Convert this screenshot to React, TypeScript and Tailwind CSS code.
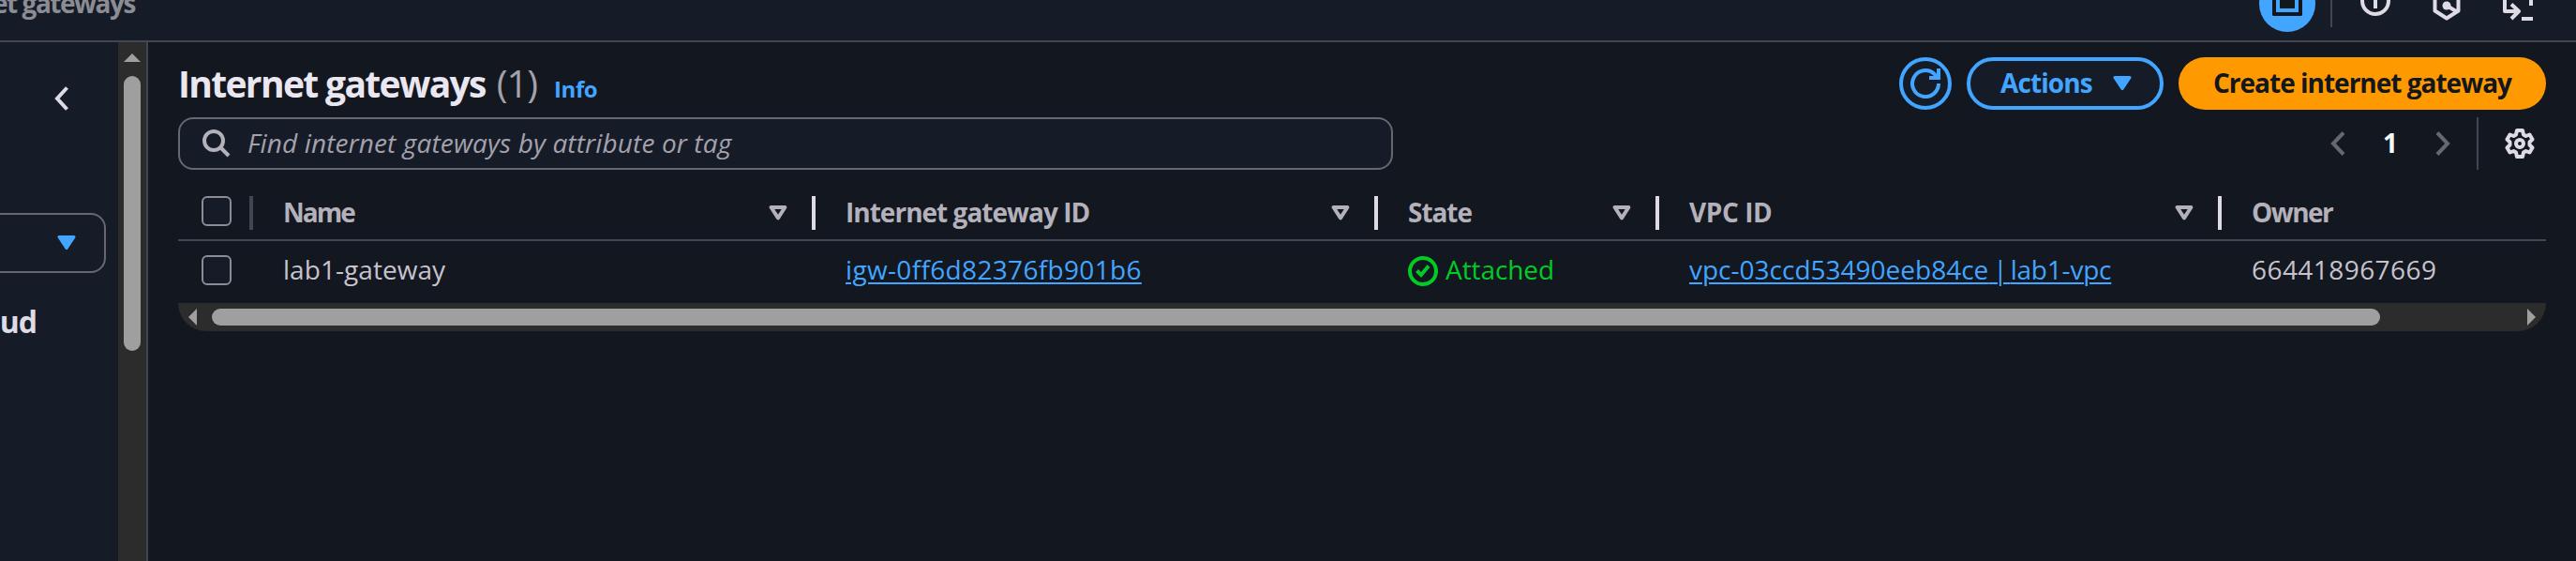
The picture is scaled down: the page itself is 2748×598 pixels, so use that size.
import type { ReactNode } from "react";

function Caret({ className = "" }: { className?: string }) {
  return (
    <svg viewBox="0 0 20 16" className={"h-4 w-5 " + className}>
      <path d="M2 2h16l-8 12z" fill="currentColor" stroke="currentColor" strokeWidth="3" strokeLinejoin="round" transform="translate(0 -0.4)" />
    </svg>
  );
}

function SortCaret() {
  return (
    <svg viewBox="0 0 20 16" className="h-4 w-5 text-[#b4b1bb]">
      <path d="M2.6 2h14.8L10 13.4z" fill="none" stroke="currentColor" strokeWidth="4" strokeLinejoin="round" />
    </svg>
  );
}

function Checkbox() {
  return <div className="size-8 rounded-md border-2 border-[#8c8c94] bg-[#161c27]" />;
}

function HeaderCell({ width, spacing, children }: { width: string; spacing: string; children: ReactNode }) {
  return (
    <div className={"flex h-9 items-center justify-between pl-8 pr-[30px] " + width}>
      <span className={"-mt-[3px] leading-10 " + spacing}>{children}</span>
      <SortCaret />
    </div>
  );
}

const Divider = () => <div className="-ml-1 h-9 w-1 shrink-0 bg-[#dedbe4]" />;

function TopBar() {
  return (
    <header className="flex h-[45px] shrink-0 items-start border-b-2 border-[#424650] overflow-hidden">
      <div className="-mt-[17px] flex w-[144px] shrink-0 justify-end whitespace-nowrap text-[28px] font-bold leading-10 tracking-[-1.46px] text-[#8c8c94]">
        Internet gateways
      </div>
      <svg viewBox="0 0 338 43" className="ml-auto h-[43px] w-[338px] shrink-0">
        <circle cx="30" cy="4" r="30" fill="#42a5ff" />
        <path d="M14 -10h32v25.500a1.500 1.500 0 0 1-1.500 1.500h-29a1.500 1.500 0 0 1-1.500-1.500z" fill="#12161d" />
        <path d="M20 -10v21h20v-21" fill="none" stroke="#42a5ff" strokeWidth="4" />
        <path d="M77 0v29" stroke="#424650" strokeWidth="2" />
        <g fill="none" stroke="#dedbe4" strokeWidth="4" strokeLinejoin="round">
          <circle cx="124" cy="1" r="14" />
          <path d="M124 -4v13" />
          <path d="M187.500 -4v15.500l12.500 8 12.500-8v-15.500M200 6l11 6.500" />
          <path d="M262 -4v16h14M269 4.500l8 7.500-8 8" />
          <path d="M290 -4v10M280 20h12" />
        </g>
        <circle cx="200" cy="6" r="4.500" fill="#dedbe4" />
      </svg>
    </header>
  );
}

function Sidebar() {
  return (
    <aside className="flex w-[158px] shrink-0 border-r-2 border-[#424650]">
      <div className="w-[126px] overflow-hidden pt-[47px]">
        <svg viewBox="0 0 16 26" className="ml-[58px] h-[26px] w-4">
          <path d="M13.500 1.500 3 13l10.500 11.500" fill="none" stroke="#dedbe4" strokeWidth="4" />
        </svg>
        <div className="-ml-5 mt-[109px] flex h-16 w-[133px] items-center justify-end rounded-2xl border-2 border-[#656871] pr-[30px] text-[#42a5ff]">
          <Caret />
        </div>
        <div className="mt-[28px] flex w-[39px] justify-end whitespace-nowrap text-[32px] font-bold leading-[48px] tracking-[-1px] text-[#dedbe4]">
          cloud
        </div>
      </div>
      <div className="flex w-[30px] flex-col items-center bg-[#2c2c2c] pt-3">
        <svg viewBox="0 0 18 9" className="h-[9px] w-[18px]">
          <path d="M9 0l9 9H0z" fill="#9f9f9f" />
        </svg>
        <div className="mt-[15px] h-[293px] w-[18px] rounded-full bg-[#9f9f9f]" />
      </div>
    </aside>
  );
}

function TitleRow() {
  return (
    <div className="flex h-14 items-center">
      <div className="mt-[6px] flex items-baseline whitespace-nowrap leading-[56px]">
        <h1 className="text-[39px] font-bold tracking-[-1.66px] text-[#ebe7f0]">Internet gateways</h1>
        <span className="ml-[12px] text-[40px] tracking-[-1.08px] text-[#a4a1ac]">(1)</span>
        <a className="ml-[18px] text-[24px] font-bold tracking-[-0.44px] text-[#42a5ff]">Info</a>
      </div>
      <div className="ml-auto flex gap-4">
        <button className="flex size-14 items-center justify-center rounded-full border-4 border-[#42a5ff] bg-[#161c27]">
          <svg viewBox="0 0 32 32" className="size-8 shrink-0" fill="none" stroke="#42a5ff" strokeWidth="4">
            <path d="M30 16a14 14 0 1 1-4.500-10.200l3 3.700" />
            <path d="M30 0v10H20" />
          </svg>
        </button>
        <button className="flex h-14 w-[210px] items-center justify-between rounded-full border-4 border-[#42a5ff] bg-[#161c27] pl-8 pr-[30px] text-[#42a5ff]">
          <span className="-mt-[2px] text-[28px] font-bold leading-10 tracking-[-0.91px]">Actions</span>
          <Caret />
        </button>
        <button className="flex h-14 w-[392px] items-center justify-center rounded-full bg-[#ff9900] text-[#12161d]">
          <span className="-mt-[2px] text-[28px] font-bold leading-10 tracking-[-1px]">Create internet gateway</span>
        </button>
      </div>
    </div>
  );
}

function FilterRow() {
  return (
    <div className="mt-2 flex h-14 items-center">
      <div className="flex h-14 w-[1296px] items-center rounded-2xl border-2 border-[#656871] bg-[#161c27] pl-6">
        <svg viewBox="0 0 30 30" className="size-[30px]" fill="none" stroke="#b4b1bb" strokeWidth="4">
          <circle cx="12" cy="12" r="10" />
          <path d="M19 19l9 9" />
        </svg>
        <span className="-mt-[2px] ml-[18px] text-[28px] italic leading-10 tracking-[0.13px] text-[#a4a1ac]">
          Find internet gateways by attribute or tag
        </span>
      </div>
      <div className="ml-auto flex h-14 items-center pr-3">
        <svg viewBox="0 0 16 26" className="h-[26px] w-4">
          <path d="M14 1.500 3 13l11 11.500" fill="none" stroke="#656871" strokeWidth="4" />
        </svg>
        <span className="-mt-[2px] w-24 text-center text-[28px] font-bold leading-10 text-[#f9f9fa]">1</span>
        <svg viewBox="0 0 16 26" className="h-[26px] w-4">
          <path d="M2 1.500 13 13 2 24.500" fill="none" stroke="#656871" strokeWidth="4" />
        </svg>
        <div className="ml-7 h-14 w-[2px] bg-[#424650]" />
        <svg viewBox="0 0 32 32" className="ml-7 size-8" fill="none" stroke="#dedbe4" strokeWidth="4" strokeLinejoin="round">
          <path d="M13 2h6l1 4.500 2.500 1.500 4-1.500 3 5-3 3v3l3 3-3 5-4-1.500-2.500 1.500-1 4.500h-6l-1-4.500-2.500-1.500-4 1.500-3-5 3-3v-3l-3-3 3-5 4 1.500 2.500-1.500z" />
          <circle cx="16" cy="16" r="4" />
        </svg>
      </div>
    </div>
  );
}

function GatewayTable() {
  return (
    <div className="whitespace-nowrap text-[28px]">
      <div className="flex h-[76px] items-center border-b-2 border-[#424650] pt-[18px] font-bold text-[#b4b1bb]">
        <div className="-mt-1 flex w-[76px] pl-[25px]">
          <Checkbox />
        </div>
        <div className="h-9 w-1 shrink-0 bg-[#424650]" />
        <HeaderCell width="w-[600px]" spacing="tracking-[-2px]">Name</HeaderCell>
        <Divider />
        <HeaderCell width="w-[600px]" spacing="tracking-[-0.99px]">Internet gateway ID</HeaderCell>
        <Divider />
        <HeaderCell width="w-[300px]" spacing="tracking-[-1.04px]">State</HeaderCell>
        <Divider />
        <HeaderCell width="w-[600px]" spacing="tracking-[-0.43px]">VPC ID</HeaderCell>
        <Divider />
        <div className="-mt-[3px] pl-8 leading-10 tracking-[-1.55px]">Owner</div>
      </div>
      <div className="flex h-[66px] items-center leading-10 text-[#c6c3ce]">
        <div className="-mt-[4px] flex w-20 pl-[25px]">
          <Checkbox />
        </div>
        <div className="-mt-[7px] flex">
          <div className="w-[600px] pl-8 tracking-[0.05px]">lab1-gateway</div>
          <div className="w-[600px] pl-8">
            <a className="text-[#42a5ff] underline decoration-2 underline-offset-[3px] tracking-[0.34px]">igw-0ff6d82376fb901b6</a>
          </div>
          <div className="flex w-[300px] items-center gap-2 pl-8 text-[#00cc24]">
            <svg viewBox="0 0 32 32" className="mt-[5px] size-8" fill="none" stroke="currentColor" strokeWidth="4">
              <circle cx="16" cy="16" r="14" />
              <path d="M9.500 15.500l4.500 4.500 8-9.500" />
            </svg>
            <span className="tracking-[-0.08px]">Attached</span>
          </div>
          <div className="w-[600px] pl-8">
            <a className="text-[#42a5ff] underline decoration-2 underline-offset-[3px]">
              <span>vpc-03ccd53490eeb84ce</span>
              <span className="tracking-[-2.2px]"> | </span>
              <span className="tracking-[-0.2px]">lab1-vpc</span>
            </a>
          </div>
          <div className="pl-8 tracking-[0.44px]">664418967669</div>
        </div>
      </div>
      <div className="flex h-[30px] items-center rounded-b-[32px] bg-[#2c2c2c] px-[11px]">
        <svg viewBox="0 0 9 18" className="h-[18px] w-[9px]">
          <path d="M9 0v18L0 9z" fill="#9f9f9f" />
        </svg>
        <div className="ml-4 h-[18px] w-[2313px] rounded-full bg-[#9f9f9f]" />
        <svg viewBox="0 0 9 18" className="ml-auto h-[18px] w-[9px]">
          <path d="M0 0l9 9-9 9z" fill="#9f9f9f" />
        </svg>
      </div>
    </div>
  );
}

export default function App() {
  return (
    <div className="flex h-[598px] w-[2748px] flex-col overflow-hidden bg-[#161c27] font-['Open_Sans','Noto_Sans',sans-serif]">
      <TopBar />
      <div className="flex min-h-0 flex-1">
        <Sidebar />
        <main className="flex-1 bg-[#13171f] px-8 pt-4">
          <TitleRow />
          <FilterRow />
          <GatewayTable />
        </main>
      </div>
    </div>
  );
}
